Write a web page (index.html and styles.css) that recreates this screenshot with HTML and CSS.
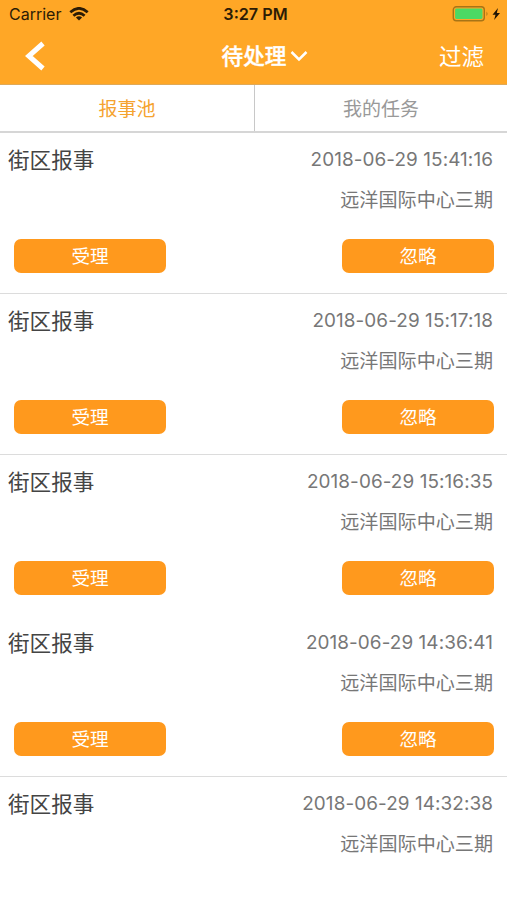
FILE: index.html
```html
<!DOCTYPE html>
<html lang="zh-CN">
<head>
<meta charset="utf-8">
<meta name="viewport" content="width=device-width, initial-scale=1">
<title>待处理</title>
<link rel="stylesheet" href="styles.css">
</head>
<body>
<header class="header">
  <div class="status">
    <div class="carrier"><span>Carrier</span>
      <svg width="20" height="14" viewBox="0 0 20 14" fill="none" stroke="#2c1c05" stroke-width="2.7"><path d="M1.3 5.3Q10-2.6 18.7 5.3M4.4 8.7Q10 3.8 15.6 8.7"/><path d="M10 13.5L6.9 10.5Q10 7.9 13.1 10.5Z" fill="#2c1c05" stroke="none"/></svg>
    </div>
    <time class="clock">3:27 PM</time>
    <div class="battery">
      <svg width="50" height="16" viewBox="0 0 50 16"><rect x="1.3" y=".8" width="31" height="14" rx="3" fill="none" stroke="#a87416" stroke-width="1.4"/><rect x="3.1" y="2.6" width="27.4" height="10.4" rx="1.4" fill="#4cd964"/><path d="M34.5 5.5Q36.5 7.8 34.5 10Z" fill="#a87416"/><path d="M46 2L40.5 8.8H43.5L42.1 14L48 6.9H44.8Z" fill="#1f1404"/></svg>
    </div>
  </div>
  <nav class="navbar">
    <button class="back" aria-label="返回"><svg width="22" height="30" viewBox="0 0 22 30" fill="none" stroke="#fff" stroke-width="5"><path d="M19 2.5L4.8 15L19 27.5"/></svg></button>
    <h1 class="title">待处理<svg width="18" height="12" viewBox="0 0 18 12" fill="none" stroke="#fff" stroke-width="2.5"><path d="M1.5 2L9 9.5L16.5 2"/></svg></h1>
    <button class="filter">过滤</button>
  </nav>
</header>
<div class="tabs"><button class="tab active">报事池</button><button class="tab">我的任务</button></div>
<main class="list">
  <article class="item">
    <div class="row"><h2>街区报事</h2><time class="date">2018-06-29 15:41:16</time></div>
    <p>远洋国际中心三期</p>
    <div class="actions"><button>受理</button><button>忽略</button></div>
  </article>
  <article class="item">
    <div class="row"><h2>街区报事</h2><time class="date">2018-06-29 15:17:18</time></div>
    <p>远洋国际中心三期</p>
    <div class="actions"><button>受理</button><button>忽略</button></div>
  </article>
  <article class="item plain">
    <div class="row"><h2>街区报事</h2><time class="date">2018-06-29 15:16:35</time></div>
    <p>远洋国际中心三期</p>
    <div class="actions"><button>受理</button><button>忽略</button></div>
  </article>
  <article class="item">
    <div class="row"><h2>街区报事</h2><time class="date">2018-06-29 14:36:41</time></div>
    <p>远洋国际中心三期</p>
    <div class="actions"><button>受理</button><button>忽略</button></div>
  </article>
  <article class="item plain">
    <div class="row"><h2>街区报事</h2><time class="date">2018-06-29 14:32:38</time></div>
    <p>远洋国际中心三期</p>
  </article>
</main>
</body>
</html>
```
FILE: styles.css
```css
* { box-sizing: border-box; }
body { margin: 0; height: 900px; overflow: hidden; background: #fff; font-family: Inter, "Noto Sans CJK SC", sans-serif; }
button { border: 0; padding: 0; background: none; font: inherit; }
svg { display: block; }
h1, h2, p { margin: 0; font-weight: 400; }
.header { height: 85px; background: #ffa726; border-bottom: 1px solid #dfa958; }
.status { display: grid; grid-template-columns: 1fr auto 1fr; align-items: center; height: 28px; padding: 0 5px 0 9px; color: #2c1c05; }
.carrier { display: flex; align-items: center; gap: 8px; font-size: 16px; }
.clock { font-size: 16.2px; font-weight: 600; }
.battery { display: flex; justify-content: flex-end; }
.navbar { display: grid; grid-template-columns: 1fr auto 1fr; align-items: center; height: 56px; padding: 0 23px 0 24px; color: #fff; }
.back { justify-self: start; }
.title { display: flex; align-items: center; gap: 4px; font-size: 21.6px; font-weight: 500; line-height: 30px; margin-left: 22px; -webkit-text-stroke: 0.4px #fff; }
.filter { justify-self: end; margin-top: 2px; font-size: 22.5px; line-height: 30px; color: #fff; }
.tabs { display: flex; height: 48px; border-bottom: 2px solid #d6d6d6; }
.tab { flex: 1; padding-bottom: 2px; font-size: 19px; color: #999; }
.tab.active { flex: 0 0 255px; color: #f5a32f; border-right: 1px solid #c8c8c8; }
.item { height: 161px; padding: 11px 14px 0 8px; border-bottom: 1px solid #dcdcdc; }
.item.plain { border-bottom-color: transparent; }
.row { display: flex; justify-content: space-between; height: 32px; line-height: 32px; }
.row h2 { font-size: 21.6px; color: #444; }
.date { font-size: 18.9px; letter-spacing: 0.09px; color: #777; }
.item p { margin-top: 9px; height: 30px; font-size: 19.1px; line-height: 30px; text-align: right; color: #777; }
.actions { display: flex; justify-content: space-between; margin: 24px -1px 0 6px; }
.actions button { width: 152px; height: 34px; border-radius: 7px; background: #ff991d; color: #fff; font-size: 18.6px; line-height: 34px; }
```
